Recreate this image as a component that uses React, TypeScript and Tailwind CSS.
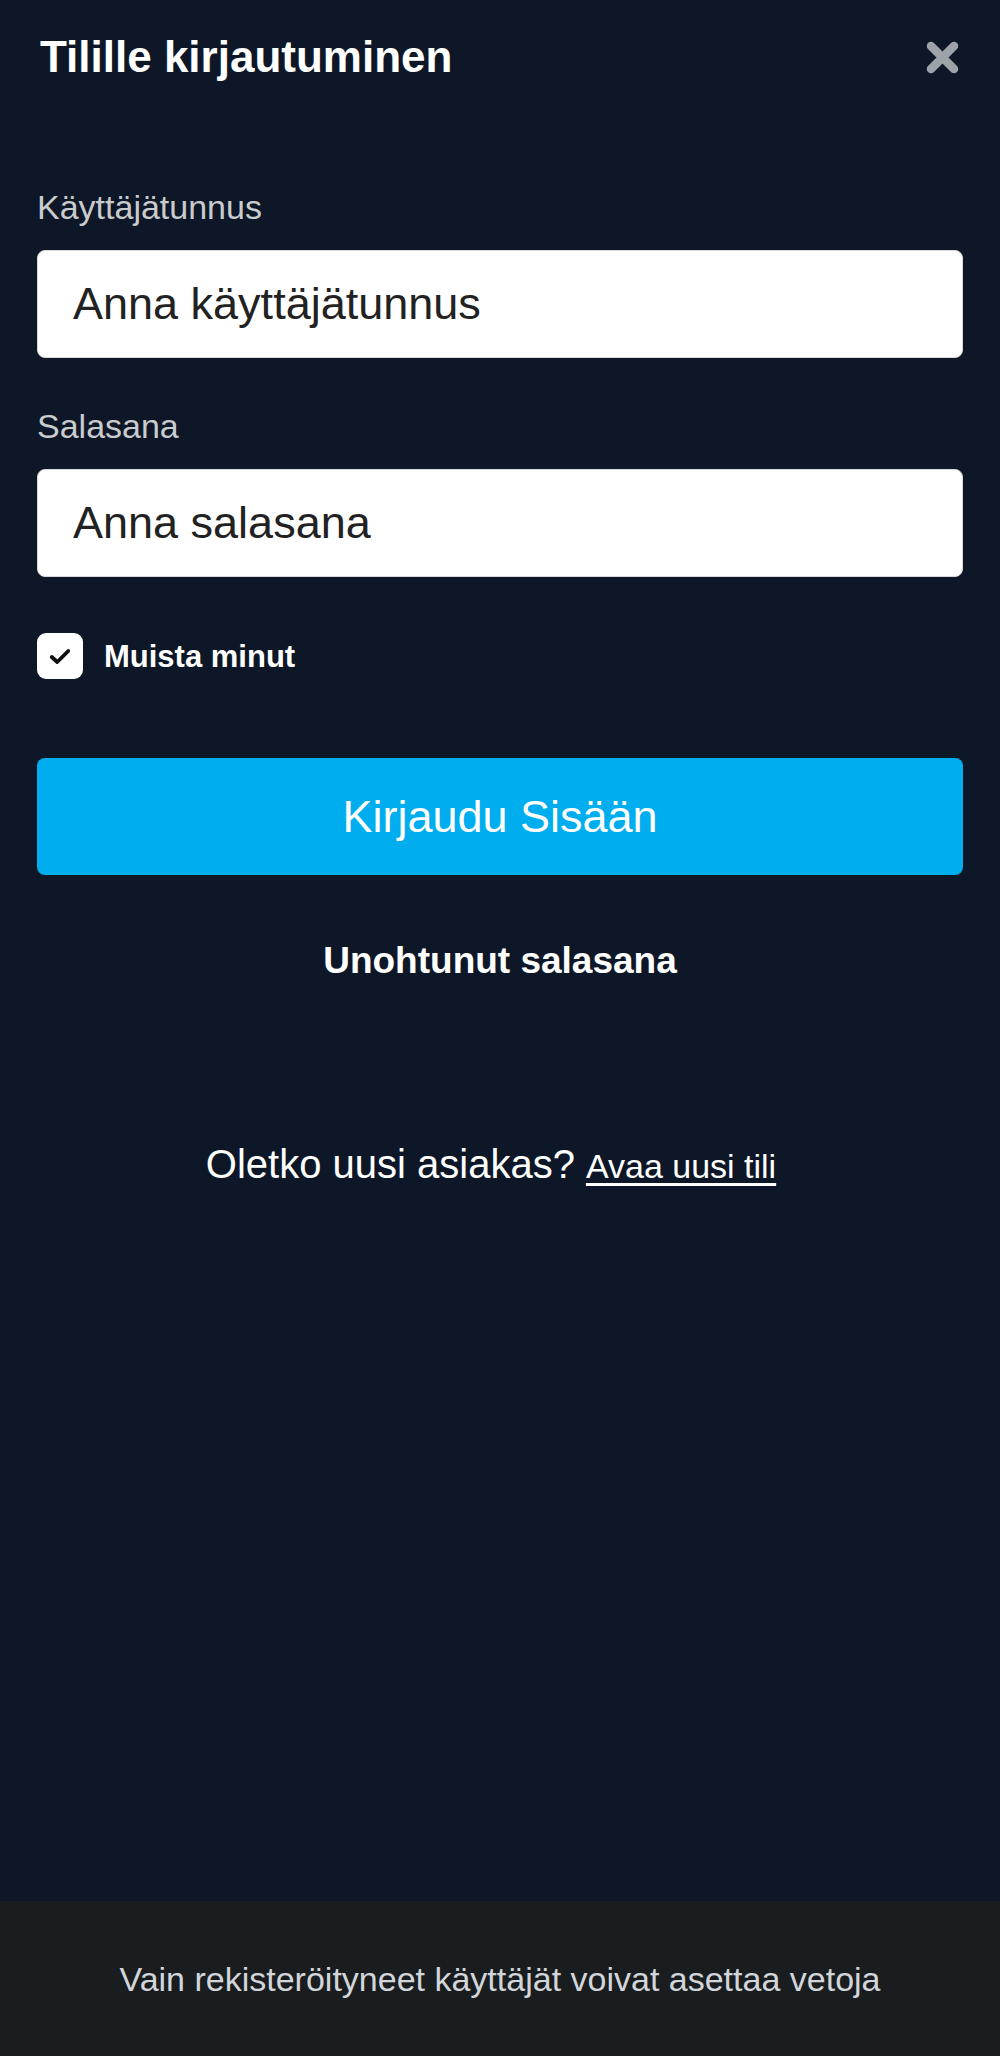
import React from "react";

const font = { fontFamily: '"Liberation Sans", Arial, Helvetica, sans-serif' };

export default function App() {
  return (
    <div
      className="min-h-[2056px] flex flex-col bg-[#0d1727] text-white"
      style={font}
    >
      <main className="flex-1 flex flex-col px-[37px] pt-[35px]">
        <div className="flex items-center justify-between h-[44px]">
          <h1 className="pl-[3px] text-[44px] leading-none font-bold text-white">
            Tilille kirjautuminen
          </h1>
          <button aria-label="Sulje" className="mr-[3px] w-[35px] h-[35px] flex items-center justify-center">
            <svg viewBox="0 0 35 35" width="35" height="35">
              <path
                d="M6 6 L29 29 M29 6 L6 29"
                stroke="#9ea3a9"
                strokeWidth="8.5"
                strokeLinecap="round"
                fill="none"
              />
            </svg>
          </button>
        </div>

        <label className="mt-[111px] block text-[34px] leading-[34px] text-[#c9cbcd]">
          Käyttäjätunnus
        </label>
        <input
          className="mt-[26px] h-[108px] w-full rounded-[8px] bg-white border border-[#d9d9d9] pl-[35px] text-[45px] text-[#1f1f1f] placeholder:text-[#222222] outline-none"
          style={font}
          placeholder="Anna käyttäjätunnus"
        />

        <label className="mt-[51px] block text-[34px] leading-[34px] text-[#c9cbcd]">
          Salasana
        </label>
        <input
          type="password"
          className="mt-[26px] h-[108px] w-full rounded-[8px] bg-white border border-[#d9d9d9] pl-[35px] text-[45px] text-[#1f1f1f] placeholder:text-[#222222] outline-none"
          style={font}
          placeholder="Anna salasana"
        />

        <div className="mt-[56px] h-[46px] flex items-center gap-[21px]">
          <div className="w-[46px] h-[46px] rounded-[9px] bg-white flex items-center justify-center">
            <svg viewBox="0 0 24 18" width="22" height="17">
              <path
                d="M3 9.5 L9 15 L21 3"
                stroke="#111"
                strokeWidth="4.2"
                strokeLinecap="round"
                strokeLinejoin="round"
                fill="none"
              />
            </svg>
          </div>
          <span className="text-[31px] leading-none font-bold text-white">Muista minut</span>
        </div>

        <button
          className="mt-[79px] h-[117px] w-full rounded-[8px] bg-[#00aeef] text-white text-[45px] leading-none flex items-center justify-center"
          style={font}
        >
          Kirjaudu Sisään
        </button>

        <div className="mt-[67px] text-center text-[37px] leading-none font-bold text-white">
          Unohtunut salasana
        </div>

        <div className="mt-[165px] flex items-baseline justify-center pr-[18px] leading-none text-white">
          <span className="text-[40px]">Oletko uusi asiakas?</span>
          <span className="ml-[11px] text-[34px] underline underline-offset-[5px] decoration-[3px]">
            Avaa uusi tili
          </span>
        </div>
      </main>

      <footer className="h-[155px] bg-[#1a1d1f] flex items-center justify-center">
        <span className="text-[34px] leading-none text-[#d2d6da]">
          Vain rekisteröityneet käyttäjät voivat asettaa vetoja
        </span>
      </footer>
    </div>
  );
}
